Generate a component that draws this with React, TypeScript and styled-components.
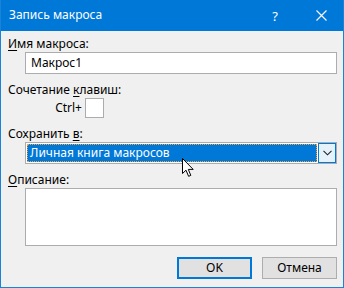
import styled, { createGlobalStyle } from "styled-components";

const GlobalStyle = createGlobalStyle`
    html, body {
        margin: 0;
        padding: 0;
        background: #f0f0f0;
    }
    * {
        box-sizing: border-box;
    }
`;

const Window = styled.div`
    position: relative;
    width: 344px;
    height: 288px;
    border: 1px solid #1883d7;
    border-top: none;
    background: #f0f0f0;
    display: flex;
    flex-direction: column;
    font-family: "Noto Sans", "Open Sans", sans-serif;
    font-size: 12px;
    line-height: 16px;
    color: #000;
    overflow: hidden;
`;

const TitleBar = styled.div`
    height: 31px;
    margin: 0 -1px;
    background: #0078d7;
    color: #fff;
    display: flex;
    align-items: center;
    padding-left: 9px;
`;

const Title = styled.div`
    flex: 1;
    font-size: 12px;
    padding-bottom: 1px;
`;

const TitleButton = styled.div`
    width: 46px;
    height: 31px;
    display: flex;
    align-items: center;
    justify-content: center;
    font-size: 13px;
`;

const Content = styled.div`
    flex: 1;
    display: flex;
    flex-direction: column;
    padding: 5px 6px 7px 6px;
`;

const Label = styled.div<{ $gap?: number }>`
    height: 16px;
    margin-top: ${(p) => p.$gap ?? 0}px;
    padding-left: 1px;
    u {
        text-decoration-thickness: 1px;
        text-underline-offset: 2px;
    }
`;

const Field = styled.div<{ $height: number }>`
    margin-left: 18px;
    height: ${(p) => p.$height}px;
    background: #fff;
    border: 1px solid #acacac;
    display: flex;
    align-items: center;
    padding-left: 5px;
`;

const ShortcutRow = styled.div`
    display: flex;
    align-items: center;
    height: 20px;
`;

const ShortcutLabel = styled.div`
    width: 78px;
    text-align: right;
    padding-right: 3px;
`;

const KeyBox = styled.div`
    width: 19px;
    height: 20px;
    background: #fff;
    border: 1px solid #acacac;
`;

const Select = styled.div`
    margin-left: 18px;
    height: 22px;
    background: #fff;
    border: 1px solid #acacac;
    display: flex;
    padding: 1px;
`;

const SelectedValue = styled.div`
    flex: 1;
    background: #0078d7;
    color: #fff;
    border: 1px dotted #f7a23a;
    display: flex;
    align-items: center;
    padding-left: 2px;
`;

const DropButton = styled.div`
    width: 18px;
    margin-left: 1px;
    margin-top: -1px;
    margin-bottom: -1px;
    margin-right: -1px;
    background: #e5f1fb;
    border: 1px solid #0078d7;
    display: flex;
    align-items: center;
    justify-content: center;
`;

const ButtonRow = styled.div`
    margin-top: 11px;
    display: flex;
    justify-content: flex-end;
    gap: 10px;
`;

const Button = styled.div<{ $default?: boolean }>`
    width: 75px;
    height: 22px;
    background: #e1e1e1;
    border: ${(p) => (p.$default ? "2px solid #0078d7" : "1px solid #adadad")};
    display: flex;
    align-items: center;
    justify-content: center;
`;

const Cursor = styled.svg`
    position: absolute;
    left: 181px;
    top: 158px;
`;

export default function App() {
    return (
        <>
            <GlobalStyle />
            <Window>
                <TitleBar>
                    <Title>Запись макроса</Title>
                    <TitleButton>?</TitleButton>
                    <TitleButton>
                        <svg width="11" height="11" viewBox="0 0 11 11">
                            <path d="M0.5 0.5 L10.5 10.5 M10.5 0.5 L0.5 10.5" stroke="#fff" strokeWidth="1.1" />
                        </svg>
                    </TitleButton>
                </TitleBar>
                <Content>
                    <Label>
                        <u>И</u>мя макроса:
                    </Label>
                    <Field $height={22}>Макрос1</Field>
                    <Label $gap={8}>
                        Сочетание <u>к</u>лавиш:
                    </Label>
                    <ShortcutRow>
                        <ShortcutLabel>Ctrl+</ShortcutLabel>
                        <KeyBox />
                    </ShortcutRow>
                    <Label $gap={8}>
                        Сохранить <u>в</u>:
                    </Label>
                    <Select>
                        <SelectedValue>Личная книга макросов</SelectedValue>
                        <DropButton>
                            <svg width="9" height="6" viewBox="0 0 9 6">
                                <path d="M0.5 0.8 L4.5 4.8 L8.5 0.8" stroke="#222" strokeWidth="1.1" fill="none" />
                            </svg>
                        </DropButton>
                    </Select>
                    <Label $gap={8}>
                        <u>О</u>писание:
                    </Label>
                    <Field $height={58} />
                    <ButtonRow>
                        <Button $default>OK</Button>
                        <Button>Отмена</Button>
                    </ButtonRow>
                </Content>
                <Cursor width="13" height="20" viewBox="0 0 13 20">
                    <path
                        d="M0.5 0.5 L0.5 15.5 L4 12.2 L6.6 18.3 L8.8 17.4 L6.3 11.4 L11.2 11.4 Z"
                        fill="#fff"
                        stroke="#000"
                        strokeWidth="1"
                        strokeLinejoin="miter"
                    />
                </Cursor>
            </Window>
        </>
    );
}
